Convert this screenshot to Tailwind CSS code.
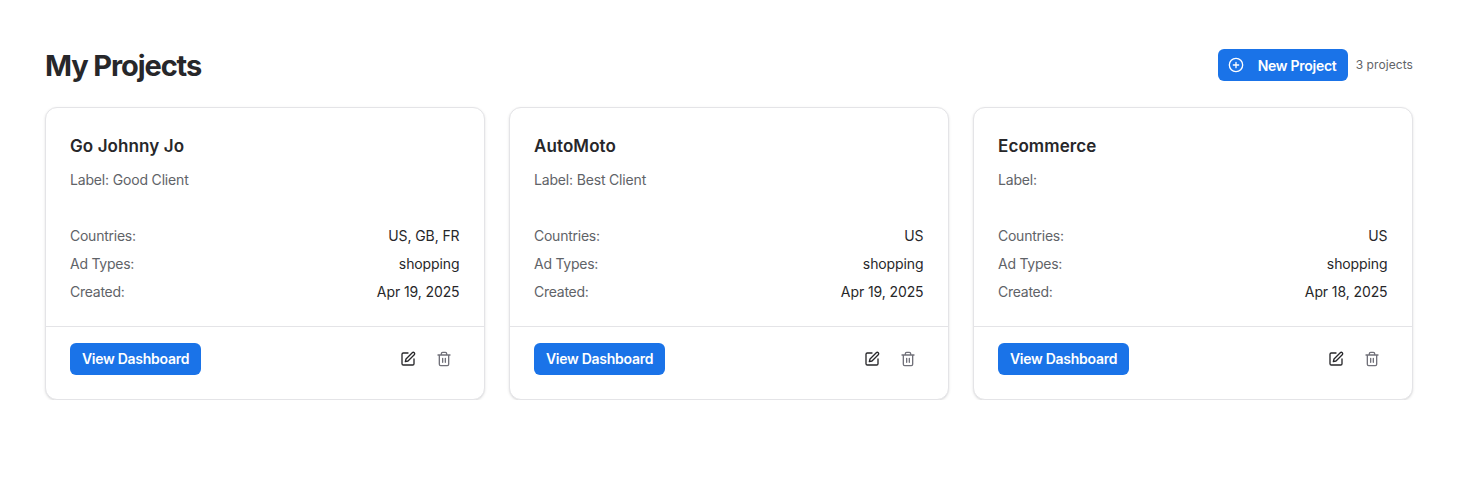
<!DOCTYPE html>
<html>
<head>
<meta charset="utf-8">
<script src="https://cdn.jsdelivr.net/npm/@tailwindcss/browser@4"></script>
</head>
<body class="bg-white font-['Inter',sans-serif] antialiased">
<main class="px-[45px] pt-[49px] w-[1458px]">
  <header class="flex items-center justify-between h-[32px] mb-[26px]">
    <h1 class="pt-[2px] text-[29px] leading-[34px] font-bold tracking-[-1.1px] text-[#27272a]">My Projects</h1>
    <div class="flex items-center gap-2">
      <button class="flex items-center h-[32px] w-[130px] pl-[10px] rounded-[6px] bg-[#1a73e8] text-white text-[14px] font-semibold tracking-[-0.27px]"><svg class="w-4 h-4 mr-[14px]" viewBox="0 0 24 24" fill="none" stroke="currentColor" stroke-width="2" stroke-linecap="round" stroke-linejoin="round"><circle cx="12" cy="12" r="10"/><path d="M8 12h8M12 8v8"/></svg>New Project</button>
      <span class="text-[12px] text-[#5f6368] tracking-[0.08px]">3 projects</span>
    </div>
  </header>
  <section class="grid grid-cols-3 gap-6">
    <article class="h-[293px] flex flex-col rounded-xl border border-[#e4e4e7] bg-white shadow-sm">
      <div class="h-[219px] border-b border-[#e4e4e7] px-6 pt-6">
        <h2 class="text-[17px] leading-[28px] font-semibold tracking-[0.1px] text-[#27272a]">Go Johnny Jo</h2>
        <p class="mt-[10px] text-[14px] leading-[20px] tracking-[-0.17px] text-[#5f6368]">Label: Good Client</p>
        <dl class="mt-[36px] flex flex-col gap-2 text-[14px] leading-[20px]">
          <div class="flex justify-between"><dt class="text-[#5f6368] tracking-[-0.25px]">Countries:</dt><dd class="text-[#27272a] tracking-[-0.1px] pr-[0.5px]">US, GB, FR</dd></div>
          <div class="flex justify-between"><dt class="text-[#5f6368] tracking-[-0.25px]">Ad Types:</dt><dd class="text-[#27272a] tracking-[-0.1px] pr-[0.5px]">shopping</dd></div>
          <div class="flex justify-between"><dt class="text-[#5f6368] tracking-[-0.25px]">Created:</dt><dd class="text-[#27272a] tracking-[-0.1px] pr-[0.5px]">Apr 19, 2025</dd></div>
        </dl>
      </div>
      <div class="flex items-center justify-between pt-4 pl-6 pr-[32px]">
        <button class="h-[32px] w-[131px] pb-px rounded-[6px] bg-[#1a73e8] text-white text-[14px] font-semibold tracking-[-0.27px]">View Dashboard</button>
        <div class="flex items-center gap-5">
          <svg class="w-4 h-4 text-[#27272a]" viewBox="0 0 24 24" fill="none" stroke="currentColor" stroke-width="2" stroke-linecap="round" stroke-linejoin="round"><path d="M12 3H5a2 2 0 0 0-2 2v14a2 2 0 0 0 2 2h14a2 2 0 0 0 2-2v-7"/><path d="M18.4 2.6a2.1 2.1 0 1 1 3 3L12 15l-4 1 1-4Z"/></svg>
          <svg class="w-4 h-4 text-[#71717a]" viewBox="0 0 24 24" fill="none" stroke="currentColor" stroke-width="2" stroke-linecap="round" stroke-linejoin="round"><path d="M3 6h18M19 6v14a2 2 0 0 1-2 2H7a2 2 0 0 1-2-2V6M8 6V4a2 2 0 0 1 2-2h4a2 2 0 0 1 2 2v2M10 11v6M14 11v6"/></svg>
        </div>
      </div>
    </article>
    <article class="h-[293px] flex flex-col rounded-xl border border-[#e4e4e7] bg-white shadow-sm">
      <div class="h-[219px] border-b border-[#e4e4e7] px-6 pt-6">
        <h2 class="text-[17px] leading-[28px] font-semibold tracking-[0.1px] text-[#27272a]">AutoMoto</h2>
        <p class="mt-[10px] text-[14px] leading-[20px] tracking-[-0.17px] text-[#5f6368]">Label: Best Client</p>
        <dl class="mt-[36px] flex flex-col gap-2 text-[14px] leading-[20px]">
          <div class="flex justify-between"><dt class="text-[#5f6368] tracking-[-0.25px]">Countries:</dt><dd class="text-[#27272a] tracking-[-0.1px] pr-[0.5px]">US</dd></div>
          <div class="flex justify-between"><dt class="text-[#5f6368] tracking-[-0.25px]">Ad Types:</dt><dd class="text-[#27272a] tracking-[-0.1px] pr-[0.5px]">shopping</dd></div>
          <div class="flex justify-between"><dt class="text-[#5f6368] tracking-[-0.25px]">Created:</dt><dd class="text-[#27272a] tracking-[-0.1px] pr-[0.5px]">Apr 19, 2025</dd></div>
        </dl>
      </div>
      <div class="flex items-center justify-between pt-4 pl-6 pr-[32px]">
        <button class="h-[32px] w-[131px] pb-px rounded-[6px] bg-[#1a73e8] text-white text-[14px] font-semibold tracking-[-0.27px]">View Dashboard</button>
        <div class="flex items-center gap-5">
          <svg class="w-4 h-4 text-[#27272a]" viewBox="0 0 24 24" fill="none" stroke="currentColor" stroke-width="2" stroke-linecap="round" stroke-linejoin="round"><path d="M12 3H5a2 2 0 0 0-2 2v14a2 2 0 0 0 2 2h14a2 2 0 0 0 2-2v-7"/><path d="M18.4 2.6a2.1 2.1 0 1 1 3 3L12 15l-4 1 1-4Z"/></svg>
          <svg class="w-4 h-4 text-[#71717a]" viewBox="0 0 24 24" fill="none" stroke="currentColor" stroke-width="2" stroke-linecap="round" stroke-linejoin="round"><path d="M3 6h18M19 6v14a2 2 0 0 1-2 2H7a2 2 0 0 1-2-2V6M8 6V4a2 2 0 0 1 2-2h4a2 2 0 0 1 2 2v2M10 11v6M14 11v6"/></svg>
        </div>
      </div>
    </article>
    <article class="h-[293px] flex flex-col rounded-xl border border-[#e4e4e7] bg-white shadow-sm">
      <div class="h-[219px] border-b border-[#e4e4e7] px-6 pt-6">
        <h2 class="text-[17px] leading-[28px] font-semibold tracking-[0.1px] text-[#27272a]">Ecommerce</h2>
        <p class="mt-[10px] text-[14px] leading-[20px] tracking-[-0.17px] text-[#5f6368]">Label:</p>
        <dl class="mt-[36px] flex flex-col gap-2 text-[14px] leading-[20px]">
          <div class="flex justify-between"><dt class="text-[#5f6368] tracking-[-0.25px]">Countries:</dt><dd class="text-[#27272a] tracking-[-0.1px] pr-[0.5px]">US</dd></div>
          <div class="flex justify-between"><dt class="text-[#5f6368] tracking-[-0.25px]">Ad Types:</dt><dd class="text-[#27272a] tracking-[-0.1px] pr-[0.5px]">shopping</dd></div>
          <div class="flex justify-between"><dt class="text-[#5f6368] tracking-[-0.25px]">Created:</dt><dd class="text-[#27272a] tracking-[-0.1px] pr-[0.5px]">Apr 18, 2025</dd></div>
        </dl>
      </div>
      <div class="flex items-center justify-between pt-4 pl-6 pr-[32px]">
        <button class="h-[32px] w-[131px] pb-px rounded-[6px] bg-[#1a73e8] text-white text-[14px] font-semibold tracking-[-0.27px]">View Dashboard</button>
        <div class="flex items-center gap-5">
          <svg class="w-4 h-4 text-[#27272a]" viewBox="0 0 24 24" fill="none" stroke="currentColor" stroke-width="2" stroke-linecap="round" stroke-linejoin="round"><path d="M12 3H5a2 2 0 0 0-2 2v14a2 2 0 0 0 2 2h14a2 2 0 0 0 2-2v-7"/><path d="M18.4 2.6a2.1 2.1 0 1 1 3 3L12 15l-4 1 1-4Z"/></svg>
          <svg class="w-4 h-4 text-[#71717a]" viewBox="0 0 24 24" fill="none" stroke="currentColor" stroke-width="2" stroke-linecap="round" stroke-linejoin="round"><path d="M3 6h18M19 6v14a2 2 0 0 1-2 2H7a2 2 0 0 1-2-2V6M8 6V4a2 2 0 0 1 2-2h4a2 2 0 0 1 2 2v2M10 11v6M14 11v6"/></svg>
        </div>
      </div>
    </article>
  </section>
</main>
</body>
</html>
